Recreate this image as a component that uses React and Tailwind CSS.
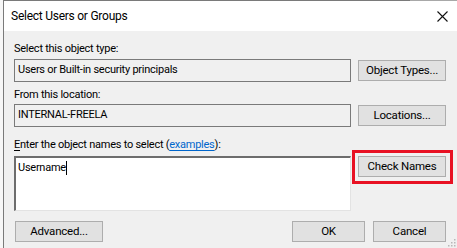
import React from "react";

const font = { fontFamily: 'Roboto, "Liberation Sans", Arial, sans-serif' };

function Btn({ children, className = "" }) {
  return (
    <div
      className={`flex items-center justify-center h-[21px] bg-[#e1e1e1] border border-[#adadad] text-[11.5px] tracking-[-0.2px] text-black leading-none ${className}`}
    >
      {children}
    </div>
  );
}

export default function App() {
  return (
    <div
      className="relative w-[457px] h-[248px] bg-[#f7f7f7] overflow-hidden text-black"
      style={font}
    >
      <div className="ml-[3px] h-[248px] border-l border-t border-[#7a7a7a] flex flex-col">
        {/* Title bar */}
        <div className="h-[30px] bg-white flex items-center justify-between pl-[7px] pr-[9px] shrink-0">
          <span className="text-[12px] tracking-[-0.25px] leading-none">Select Users or Groups</span>
          <svg width="11" height="11" viewBox="0 0 11 11">
            <path d="M0.5 0.5 L10.5 10.5 M10.5 0.5 L0.5 10.5" stroke="#111" strokeWidth="1.1" />
          </svg>
        </div>
        {/* Content */}
        <div className="flex-1 bg-[#f0f0f0] pl-[10px] flex flex-col text-[11px] tracking-[-0.25px]">
          <div className="mt-[10px] h-[16px] flex items-center">
            Select this object type:
          </div>
          <div className="mt-[2px] flex items-center">
            <div className="w-[337px] h-[23px] border border-[#7a7a7a] bg-[#f0f0f0] flex items-center pl-[3px]">
              Users or Built-in security principals
            </div>
            <Btn className="ml-[7px] w-[88px]">Object Types...</Btn>
          </div>
          <div className="mt-[5px] h-[16px] flex items-center">
            From this location:
          </div>
          <div className="mt-[1px] flex items-center">
            <div className="w-[337px] h-[23px] border border-[#7a7a7a] bg-[#f0f0f0] flex items-center pl-[3px]">
              INTERNAL-FREELA
            </div>
            <Btn className="ml-[7px] w-[88px]">Locations...</Btn>
          </div>
          <div className="mt-[10px] h-[16px] flex items-center">
            <span className="underline underline-offset-2">E</span>
            <span>nter the object names to select (</span>
            <span className="text-[#0066cc] underline underline-offset-2">examples</span>
            <span>):</span>
          </div>
          <div className="mt-[3px] flex items-start">
            <div className="w-[337px] h-[55px] bg-white border-t-2 border-l-2 border-r border-b border-t-[#6d6d6d] border-l-[#6d6d6d] border-r-[#e3e3e3] border-b-[#e3e3e3] pl-[2px] pt-[2px] leading-[15px] flex items-start">
              <span>Username</span>
              <span className="inline-block w-px h-[14px] bg-black mt-[1px]"></span>
            </div>
            <Btn className="ml-[7px] w-[88px]">Check Names</Btn>
          </div>
          <div className="mt-[10px] flex items-center">
            <Btn className="ml-[1px] w-[88px]">Advanced...</Btn>
            <div className="flex-1" />
            <Btn className="w-[73px]">OK</Btn>
            <Btn className="ml-[8px] w-[73px] mr-[11px]">Cancel</Btn>
          </div>
        </div>
      </div>
      {/* top border lighter segment */}
      <div className="absolute left-[410px] top-0 w-[47px] h-px bg-[#a8a8a8]" />
      {/* red annotation */}
      <div className="absolute left-[352px] top-[150px] w-[101px] h-[34px] border-[3px] border-[#e81123]" />
      {/* resize grip */}
      <svg className="absolute right-[1px] bottom-[1px]" width="9" height="9" viewBox="0 0 9 9">
        {[
          [7, 1], [4, 4], [7, 4], [1, 7], [4, 7], [7, 7],
        ].map(([x, y], i) => (
          <rect key={i} x={x} y={y} width="1.5" height="1.5" fill="#b8b8b8" />
        ))}
      </svg>
    </div>
  );
}
